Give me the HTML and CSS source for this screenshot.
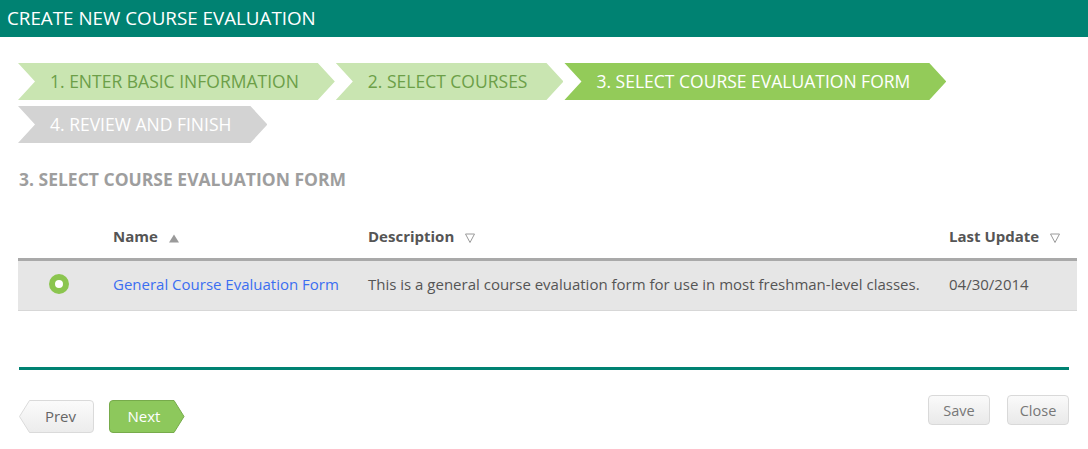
FILE: index.html
```html
<!DOCTYPE html>
<html lang="en">
<head>
<meta charset="utf-8">
<title>Create New Course Evaluation</title>
<link rel="stylesheet" href="styles.css">
</head>
<body>
<header class="topbar">
  <h1 class="topbar-title">CREATE NEW COURSE EVALUATION</h1>
</header>
<main class="content">
  <ol class="steps">
    <li class="step step-done">1. ENTER BASIC INFORMATION</li>
    <li class="step step-done">2. SELECT COURSES</li>
    <li class="step step-active">3. SELECT COURSE EVALUATION FORM</li>
    <li class="step step-todo">4. REVIEW AND FINISH</li>
  </ol>

  <h2 class="section-title">3. SELECT COURSE EVALUATION FORM</h2>

  <table class="grid">
    <colgroup>
      <col class="col-radio">
      <col class="col-name">
      <col class="col-desc">
      <col class="col-date">
    </colgroup>
    <thead>
      <tr>
        <th></th>
        <th>Name<svg class="sort" viewBox="0 0 10 10" width="10" height="10"><polygon points="0,9.5 5,1.5 10,9.5" fill="#9a9a9a"/></svg></th>
        <th>Description<svg class="sort" viewBox="0 0 10 10" width="10" height="10"><polygon points="0.5,1 9.5,1 5,9.5" fill="none" stroke="#9a9a9a" stroke-width="1"/></svg></th>
        <th>Last Update<svg class="sort" viewBox="0 0 10 10" width="10" height="10"><polygon points="0.5,1 9.5,1 5,9.5" fill="none" stroke="#9a9a9a" stroke-width="1"/></svg></th>
      </tr>
    </thead>
    <tbody>
      <tr>
        <td><span class="radio"></span></td>
        <td><a class="link" href="#">General Course Evaluation Form</a></td>
        <td>This is a general course evaluation form for use in most freshman-level classes.</td>
        <td>04/30/2014</td>
      </tr>
    </tbody>
  </table>

  <footer class="footer">
    <div class="nav-buttons">
      <button class="shape-btn btn-prev" type="button">
        <svg class="btn-shape" viewBox="0 0 75 33" width="75" height="33">
          <defs>
            <linearGradient id="gPrev" x1="0" y1="0" x2="0" y2="1">
              <stop offset="0" stop-color="#fbfbfb"/>
              <stop offset="1" stop-color="#ececec"/>
            </linearGradient>
          </defs>
          <path d="M10.5 0.5 H71 A3.5 3.5 0 0 1 74.5 4 V29 A3.5 3.5 0 0 1 71 32.5 H10.5 L0.5 16.5 Z" fill="url(#gPrev)" stroke="#dadada"/>
        </svg>
        <span class="btn-label">Prev</span>
      </button>
      <button class="shape-btn btn-next" type="button">
        <svg class="btn-shape" viewBox="0 0 76 33" width="76" height="33">
          <path d="M4 0.5 H65 L75 16.5 L65 32.5 H4 A3.5 3.5 0 0 1 0.5 29 V4 A3.5 3.5 0 0 1 4 0.5 Z" fill="#8dc85c" stroke="#77ab4b"/>
        </svg>
        <span class="btn-label">Next</span>
      </button>
    </div>
    <div class="action-buttons">
      <button class="btn" type="button">Save</button>
      <button class="btn" type="button">Close</button>
    </div>
  </footer>
</main>
</body>
</html>
```

FILE: styles.css
```css
* { box-sizing: border-box; }

html, body {
  margin: 0;
  padding: 0;
  background: #ffffff;
  font-family: "Open Sans", "Liberation Sans", sans-serif;
}

.topbar {
  background: #008272;
  height: 37px;
  padding-left: 7px;
}

.topbar-title {
  margin: 0;
  font-size: 18.8px;
  font-weight: 400;
  line-height: 37px;
  color: #ffffff;
  white-space: nowrap;
}

.content {
  padding: 0 11px 0 18px;
}

.steps {
  list-style: none;
  margin: 26px 0 0;
  padding: 0;
  display: flex;
  flex-wrap: wrap;
  column-gap: 0;
  row-gap: 6px;
}

.step {
  height: 37px;
  line-height: 37px;
  font-size: 17.5px;
  padding: 0 36px 0 32px;
  white-space: nowrap;
  clip-path: polygon(0 0, calc(100% - 17px) 0, 100% 50%, calc(100% - 17px) 100%, 0 100%, 17px 50%);
}

.step + .step { margin-left: 1px; }
.step-todo { margin-left: 0 !important; }

.step-done {
  background: #c9e5b1;
  color: #6c9f48;
}

.step-active {
  background: #93cb59;
  color: #ffffff;
}

.step-todo {
  background: #d3d3d3;
  color: #ffffff;
}

.section-title {
  margin: 25px 0 0 1px;
  font-size: 17.5px;
  font-weight: 700;
  line-height: 22px;
  color: #9e9e9e;
}

.grid {
  margin-top: 27px;
  width: 1059px;
  table-layout: fixed;
  border-collapse: collapse;
  font-size: 15px;
}

.col-radio { width: 95px; }
.col-name { width: 255px; }
.col-desc { width: 581px; }
.col-date { width: 128px; }

.grid th {
  text-align: left;
  font-weight: 700;
  color: #555555;
  line-height: 20px;
  padding: 9px 0 12px;
  border-bottom: 3px solid #a9a9a9;
  white-space: nowrap;
}

.sort {
  margin-left: 11px;
  vertical-align: -1px;
}

.grid td {
  background: #e6e6e6;
  color: #555555;
  line-height: 20px;
  padding: 13px 0 16px;
  border-bottom: 1px solid #d7d7d7;
  white-space: nowrap;
  vertical-align: top;
}

.radio {
  display: block;
  width: 20px;
  height: 20px;
  margin-left: 31px;
  border-radius: 50%;
  background: #ffffff;
  border: 6.5px solid #8bc54f;
}

.link {
  color: #3b6ef1;
  text-decoration: none;
}

.footer {
  margin: 56px 8px 0 1px;
  border-top: 3px solid #008272;
  display: flex;
  justify-content: space-between;
  align-items: flex-start;
}

.nav-buttons {
  display: flex;
  gap: 15px;
  margin-top: 30px;
}

.shape-btn {
  position: relative;
  height: 33px;
  padding: 0;
  border: 0;
  background: transparent;
  font-family: inherit;
  font-size: 15px;
  cursor: pointer;
}

.btn-prev { width: 75px; color: #666666; }
.btn-next { width: 76px; color: #ffffff; }

.btn-shape {
  position: absolute;
  left: 0;
  top: 0;
  display: block;
}

.btn-label {
  position: relative;
  display: block;
  line-height: 33px;
}

.btn-prev .btn-label { padding-left: 8px; }
.btn-next .btn-label { padding-right: 6px; }

.action-buttons {
  display: flex;
  gap: 17px;
  margin-top: 25px;
}

.btn {
  width: 62px;
  height: 30px;
  padding: 0;
  border: 1px solid #d9d9d9;
  border-radius: 4px;
  background: linear-gradient(#fafafa, #e9e9e9);
  color: #777777;
  font-family: inherit;
  font-size: 14.5px;
  cursor: pointer;
}
```
